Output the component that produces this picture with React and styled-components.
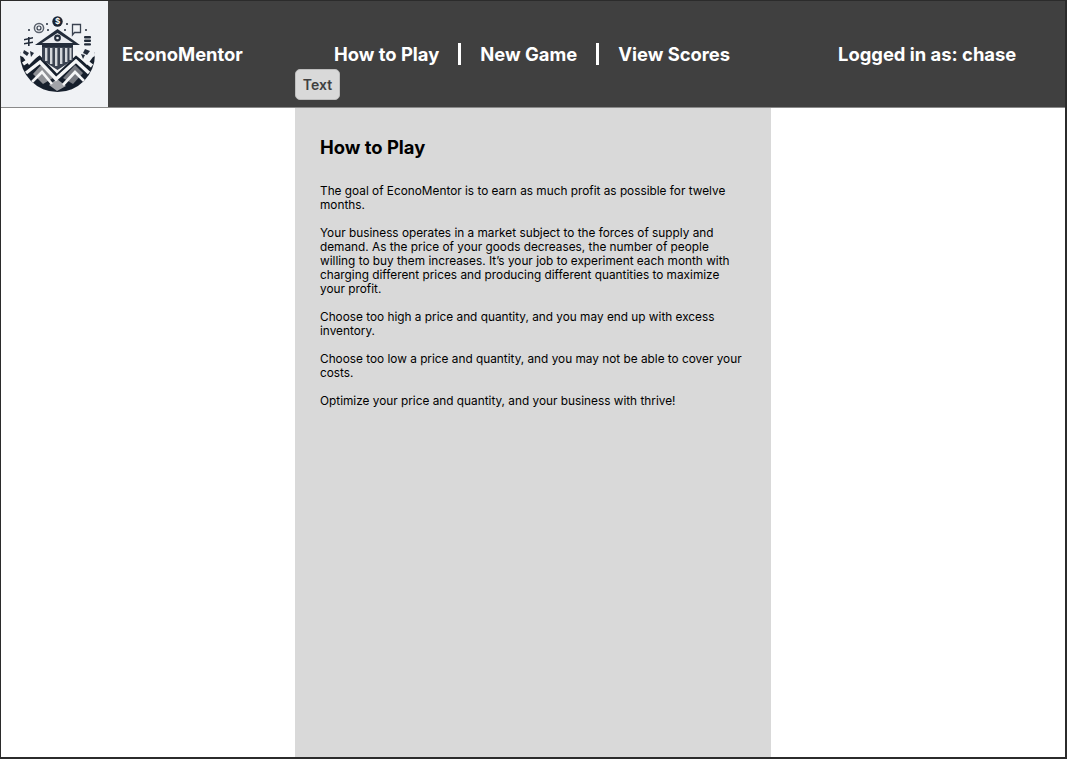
import React from 'react'
import styled, { createGlobalStyle } from 'styled-components';

const GlobalStyle = createGlobalStyle`
    html, body {
        margin: 0;
        padding: 0;
        background: #fff;
    }
    * {
        box-sizing: border-box;
    }
`;

const Page = styled.div`
    width: 1067px;
    height: 759px;
    display: flex;
    flex-direction: column;
    overflow: hidden;
    border-style: solid;
    border-color: #2b2b2b;
    border-width: 1px 2px 2px 1px;
    font-family: Inter, "Liberation Sans", sans-serif;
`;

const Header = styled.header`
    position: relative;
    height: 107px;
    flex-shrink: 0;
    display: flex;
    align-items: center;
    background: #404040;
    border-bottom: 1px solid #8a8a8a;
    color: #fff;
    font-size: 18.4px;
    font-weight: 700;
`;

const LogoBox = styled.div`
    width: 107px;
    height: 106px;
    flex-shrink: 0;
    padding: 11px 0 0 15px;
    background: #f0f2f5;
`;

const Brand = styled.div`
    margin: 0 0 0 14px;
    width: 212px;
`;

const Nav = styled.nav`
    display: flex;
    align-items: center;
    width: 504px;
`;

const NavLink = styled.span`
    white-space: nowrap;
`;

const Divider = styled.span`
    width: 3px;
    height: 22px;
    margin: 0 19px;
    background: #fff;
`;

const User = styled.div`
    white-space: nowrap;
`;

const TextChip = styled.div`
    position: absolute;
    left: 294px;
    top: 68px;
    width: 45px;
    height: 31px;
    display: flex;
    align-items: center;
    justify-content: center;
    border-radius: 5px;
    border: 1px solid #bdbdbd;
    background: #d9d9d9;
    color: #404040;
    font-size: 14px;
    font-weight: 600;
`;

const Main = styled.main`
    flex: 1;
    display: flex;
    background: #fff;
`;

const Panel = styled.section`
    width: 476px;
    margin-left: 294px;
    padding: 27px 25px 0;
    background: #d9d9d9;
    color: #000;
`;

const Title = styled.h1`
    margin: 0 0 25px;
    font-size: 18.4px;
    line-height: 24px;
    font-weight: 700;
`;

const Para = styled.p`
    margin: 0 0 14px;
    font-size: 11.82px;
    line-height: 14px;
    font-weight: 400;
`;

const Logo = () => (
    <svg width="84" height="84" viewBox="0 0 84 84" style={{ display: 'block' }}>
        <defs>
            <clipPath id="bowl">
                <circle cx="41.5" cy="42.5" r="37.5" />
            </clipPath>
        </defs>
        {/* dark bowl with the mountain stripes */}
        <g clipPath="url(#bowl)">
            <path d="M0 40 L84 40 L84 84 L0 84 Z" fill="#161f2c" />
            <path d="M0 30 H84 V42 L77 45 L71 53 L60 42 L50 50 L41.5 56 L33 50 L24 42 L13 53 L7 45 L0 42 Z" fill="#f0f2f5" />
            <path d="M25 53 L37 66 L27 72 L17 62 Z" fill="#8e9095" />
            <path d="M59 53 L47 66 L57 72 L67 61 Z" fill="#75787f" />
            <path d="M33 73 L41 67 L50 74 L41 79 Z" fill="#a2a4a9" />
            <path d="M7 52 L24 41 L41 59 L60 41 L76 54" fill="none" stroke="#f4f5f6" strokeWidth="3.6" />
            <path d="M10 61 L24 50 L40 67 L60 49 L73 61" fill="none" stroke="#f4f5f6" strokeWidth="3.4" />
            <path d="M16 70 L26 60 L36 72" fill="none" stroke="#f4f5f6" strokeWidth="2.6" />
            <path d="M47 73 L59 60 L69 70" fill="none" stroke="#f4f5f6" strokeWidth="2.6" />
        </g>
        {/* bank */}
        <path d="M19 33 L41.5 17 L64 33 Z" fill="#232c3a" />
        <path d="M26 31 L41.5 21 L57 31 Z" fill="#e8eaee" />
        <circle cx="41.5" cy="26" r="3.4" fill="#232c3a" />
        <circle cx="41.5" cy="26" r="1.3" fill="#f0f2f5" />
        <rect x="26" y="33" width="31" height="2" fill="#232c3a" />
        <path d="M26 35 H57 V48 L41.5 58 L26 48 Z" fill="#3a4250" />
        <g fill="#d3d6da">
            <rect x="29" y="36" width="2.4" height="13" />
            <rect x="34" y="36" width="2.4" height="16" />
            <rect x="39" y="36" width="2.4" height="18" />
            <rect x="44" y="36" width="2.4" height="16" />
            <rect x="49" y="36" width="2.4" height="14" />
            <rect x="53.5" y="36" width="2" height="12" />
        </g>
        {/* small icons above the bank */}
        <circle cx="41.5" cy="9.5" r="5.2" fill="#1b2430" />
        <text x="41.5" y="12.4" textAnchor="middle" fontSize="8" fontWeight="700" fill="#fff" fontFamily="Inter, sans-serif">$</text>
        <circle cx="23" cy="16" r="4.6" fill="none" stroke="#5a616c" strokeWidth="1.5" />
        <circle cx="23" cy="16" r="2" fill="none" stroke="#3a4250" strokeWidth="1.2" />
        <path d="M56.5 12.5 H64.5 V20.5 H58.5 L56.5 23 Z" fill="#f0f2f5" stroke="#3a4250" strokeWidth="1.3" />
        <g fill="#232c3a">
            <circle cx="31" cy="12" r="1" />
            <circle cx="51" cy="12" r="1" />
            <circle cx="13" cy="18" r="1" />
            <circle cx="70" cy="18" r="1" />
            <circle cx="32" cy="18" r="1" />
            <circle cx="49" cy="18" r="1" />
            <rect x="68" y="24" width="7" height="2.4" rx="1" />
            <rect x="68" y="27.6" width="7" height="2.4" rx="1" />
            <rect x="68" y="31.2" width="7" height="2.4" rx="1" />
            <path d="M8 27 L17 25 V26.4 L8 28.4 Z" />
            <path d="M8 31 L17 29.5 V31 L8 32.4 Z" />
            <rect x="12" y="25" width="1.6" height="9" />
            <path d="M8 38 L13 41 L11 44 L7 41 Z" />
            <path d="M14 39 L18 41 L15 45 Z" />
            <path d="M69 37 L74 39 L71 43 L67 41 Z" />
            <path d="M65 42 L69 43 L67 47 Z" />
        </g>
    </svg>
);

const paragraphs = [
    ['The goal of EconoMentor is to earn as much profit as possible for twelve', 'months.'],
    [
        'Your business operates in a market subject to the forces of supply and',
        'demand. As the price of your goods decreases, the number of people',
        'willing to buy them increases. It’s your job to experiment each month with',
        'charging different prices and producing different quantities to maximize',
        'your profit.',
    ],
    ['Choose too high a price and quantity, and you may end up with excess', 'inventory.'],
    ['Choose too low a price and quantity, and you may not be able to cover your', 'costs.'],
    ['Optimize your price and quantity, and your business with thrive!'],
];

const App = () => {
    return (
        <Page>
            <GlobalStyle />
            <Header>
                <LogoBox>
                    <Logo />
                </LogoBox>
                <Brand>EconoMentor</Brand>
                <Nav>
                    <NavLink>How to Play</NavLink>
                    <Divider />
                    <NavLink>New Game</NavLink>
                    <Divider />
                    <NavLink>View Scores</NavLink>
                </Nav>
                <User>Logged in as: chase</User>
                <TextChip>Text</TextChip>
            </Header>
            <Main>
                <Panel>
                    <Title>How to Play</Title>
                    {paragraphs.map((lines, i) => (
                        <Para key={i}>
                            {lines.map((line, j) => (
                                <React.Fragment key={j}>
                                    {line}
                                    {j < lines.length - 1 && <br />}
                                </React.Fragment>
                            ))}
                        </Para>
                    ))}
                </Panel>
            </Main>
        </Page>
    )
}

export default App
